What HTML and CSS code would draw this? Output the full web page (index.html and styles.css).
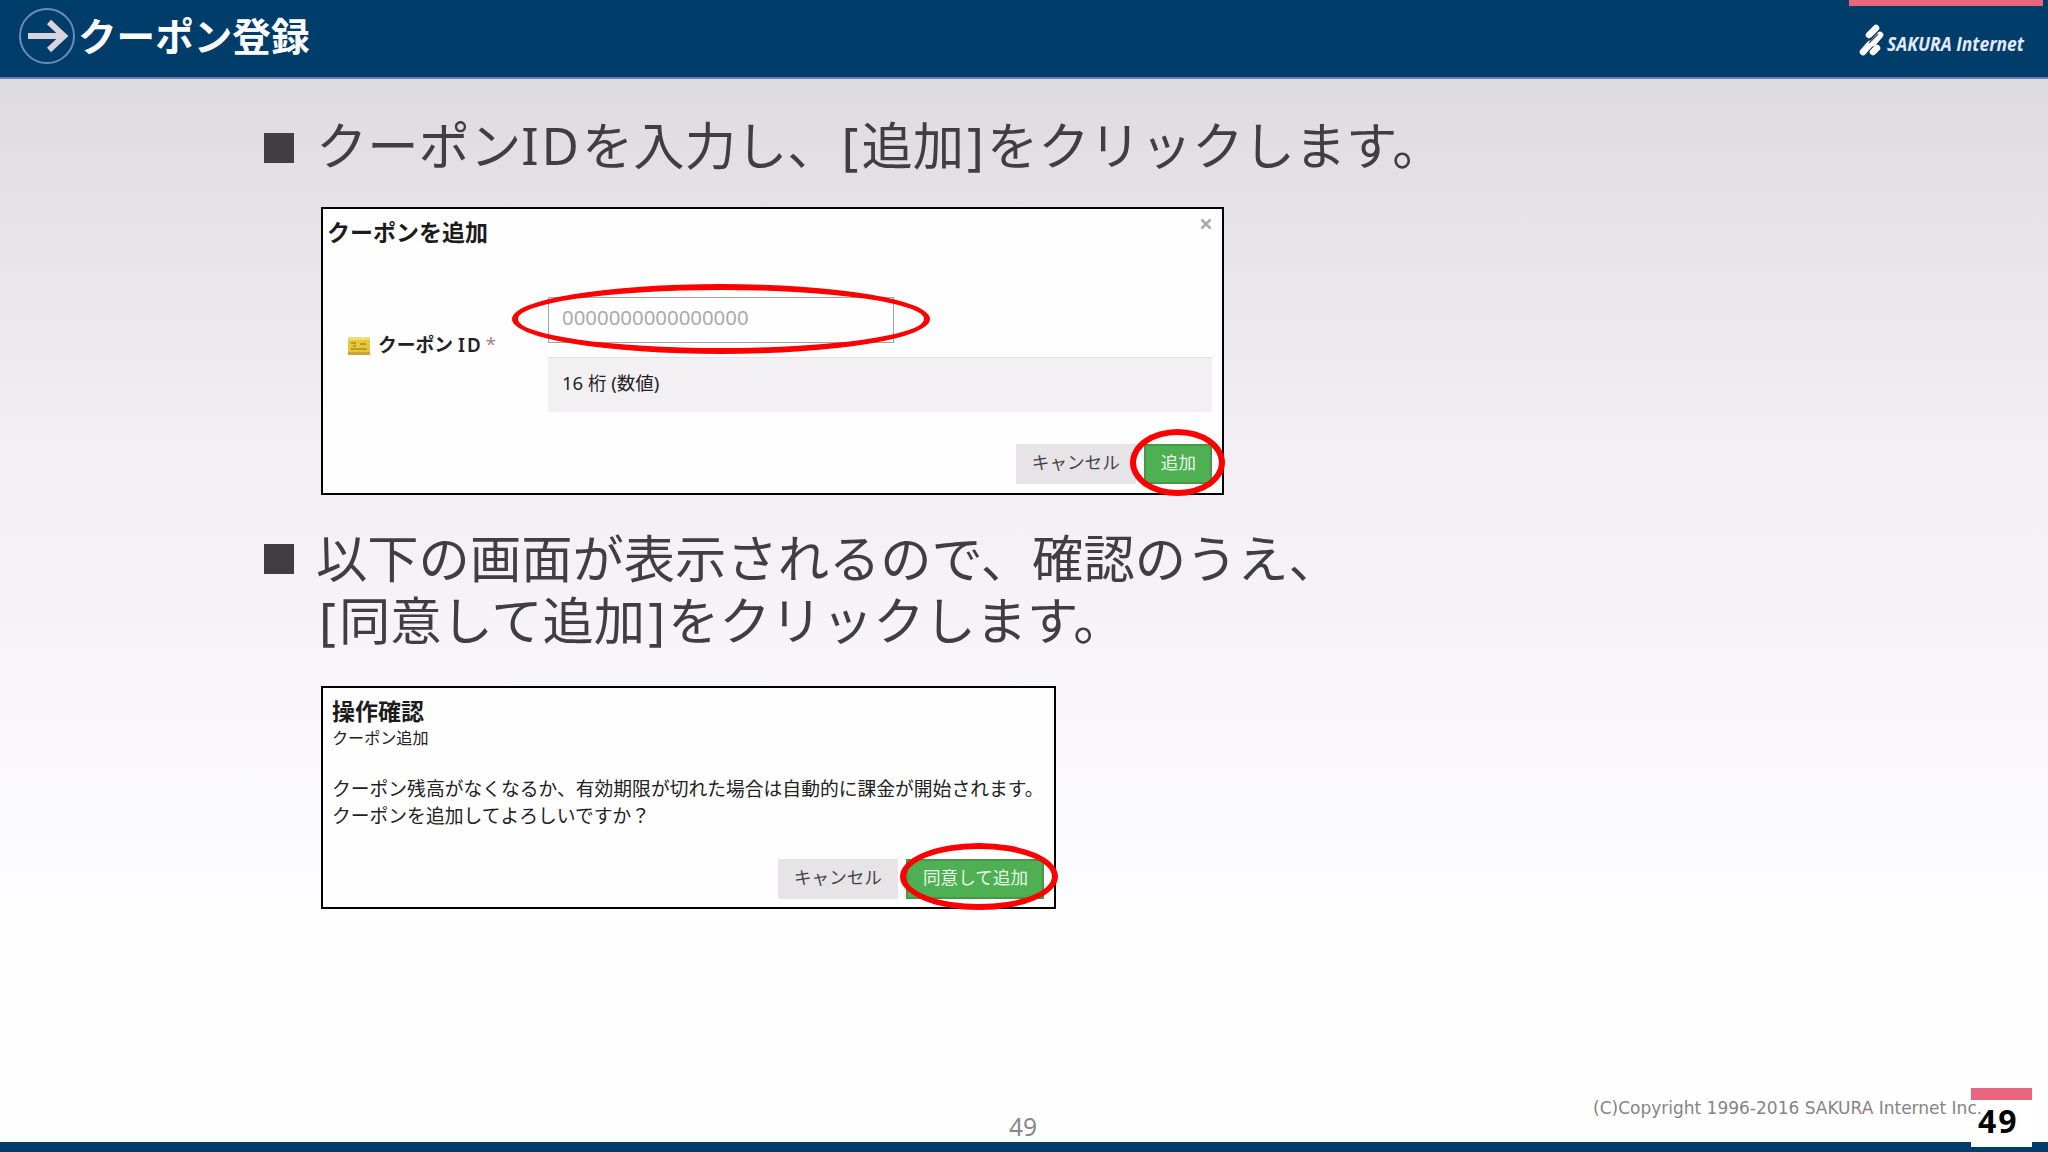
FILE: index.html
```html
<!DOCTYPE html>
<html lang="ja">
<head>
    <meta charset="UTF-8" />
    <meta name="viewport" content="width=device-width, initial-scale=1.0" />
    <title>クーポン登録</title>
    <link rel="stylesheet" href="styles.css">
</head>
<body>
    <div class="slide">
        <header class="slide-header">
            <svg class="header-icon" viewBox="0 0 58 58" aria-hidden="true">
                <circle cx="29" cy="29" r="27" fill="none" stroke="#7088bd" stroke-width="2" />
                <path d="M10 29H46M31 15L46 29L31 43" fill="none" stroke="#d9d3dc" stroke-width="6" />
            </svg>
            <h1>クーポン登録</h1>
            <div class="brand">
                <svg viewBox="0 0 176 44" role="img" aria-label="SAKURA Internet">
                    <g stroke="#fff" stroke-width="6.5" stroke-linecap="round">
                        <path d="M10 13L17 6" />
                        <path d="M14 21L21 13" />
                        <path d="M4 30L11 22" />
                        <path d="M14 30L18 26" />
                    </g>
                    <path d="M10 21L19 12" stroke="#5a5257" stroke-width="1.5" />
                    <text class="brand-text" x="28" y="29" textLength="137" lengthAdjust="spacingAndGlyphs">SAKURA Internet</text>
                </svg>
            </div>
        </header>

        <main class="content">
            <div class="step">
                <span class="bullet"></span>
                <p>クーポン<span class="latin">ID</span>を入力し、<span class="bracket">[</span>追加<span class="bracket">]</span>をクリックします。</p>
            </div>

            <section class="dialog dialog-add">
                <div class="dialog-top">
                    <h2>クーポンを追加</h2>
                    <svg class="close" viewBox="0 0 12 12" aria-hidden="true">
                        <path d="M1.5 1.5L10.5 10.5M10.5 1.5L1.5 10.5" stroke="#aaa" stroke-width="2.6" />
                    </svg>
                </div>
                <div class="form-row">
                    <div class="label">
                        <svg class="card-icon" viewBox="0 0 22 18" aria-hidden="true">
                            <rect width="22" height="18" fill="#e6c63c" />
                            <rect width="22" height="3" fill="#f0dc78" />
                            <rect y="15" width="22" height="3" fill="#c8a63a" />
                            <path d="M3 6H8M5 9H8M3 12H19M12 7H18" stroke="#b18a1c" stroke-width="1.5" />
                        </svg>
                        <span class="label-text">クーポン <span class="label-id">ID</span></span>
                        <span class="required">*</span>
                    </div>
                    <div class="field">
                        <div class="input">
                            0000000000000000
                            <span class="mark mark-input"></span>
                        </div>
                        <div class="hint">16 桁 (数値)</div>
                    </div>
                </div>
                <div class="actions">
                    <span class="btn">キャンセル</span>
                    <span class="btn btn-primary">追加<span class="mark mark-add"></span></span>
                </div>
            </section>

            <div class="step step-second">
                <span class="bullet"></span>
                <p>以下の画面が表示されるので、確認のうえ、<br><span class="bracket">[</span>同意して追加<span class="bracket">]</span>をクリックします。</p>
            </div>

            <section class="dialog dialog-confirm">
                <h2>操作確認</h2>
                <p class="subtitle">クーポン追加</p>
                <p class="message">クーポン残高がなくなるか、有効期限が切れた場合は自動的に課金が開始されます。<br>クーポンを追加してよろしいですか？</p>
                <div class="actions">
                    <span class="btn">キャンセル</span>
                    <span class="btn btn-primary">同意して追加<span class="mark mark-agree"></span></span>
                </div>
            </section>
        </main>

        <footer class="slide-footer">
            <span class="page">49</span>
            <span class="copyright">(C)Copyright 1996-2016 SAKURA Internet Inc.</span>
            <span class="page-badge">49</span>
        </footer>
    </div>
</body>
</html>
```
FILE: styles.css
```css
:root {
    --navy: #003d6b;
    --pink: #e8677f;
    --text: #403e41;
    --red: #ff0000;
    --green: #4eb052;
}

* {
    box-sizing: border-box;
}

body {
    margin: 0;
    font-family: "Noto Sans", "Noto Sans CJK JP", sans-serif;
    color: var(--text);
}

h1,
h2,
p {
    margin: 0;
}

.slide {
    width: 2048px;
    height: 1152px;
    display: flex;
    flex-direction: column;
    overflow: hidden;
    background: linear-gradient(#dddbdf 78px, #e4e2e6 200px, #f1eff2 440px, #f6f4f8 640px, #fcfbfd 860px, #fefefe 1000px);
}

/* header */

.slide-header {
    height: 79px;
    flex: none;
    display: flex;
    align-items: flex-start;
    padding-left: 18px;
    background-color: var(--navy);
    border-bottom: 2px solid #6482ac;
}

.header-icon {
    width: 58px;
    height: 58px;
    margin-top: 7px;
}

.slide-header h1 {
    margin-left: 2px;
    color: white;
    font-family: "Noto Sans CJK JP", sans-serif;
    font-size: 38.6px;
    font-weight: 700;
    line-height: 68px;
}

.brand {
    width: 194px;
    margin-left: auto;
    margin-right: 5px;
    padding: 16px 0 0 10px;
    border-top: 6px solid var(--pink);
}

.brand svg {
    display: block;
    width: 176px;
    height: 44px;
}

.brand-text {
    fill: #e4e9f8;
    font-family: "Open Sans", sans-serif;
    font-size: 19.5px;
    font-style: italic;
    font-weight: 700;
}

/* body */

.content {
    flex: 1;
    padding: 33px 0 0 264px;
}

.step {
    display: flex;
    gap: 22px;
    font-family: "Noto Sans CJK JP", sans-serif;
    font-size: 51.3px;
    font-weight: 400;
    line-height: 62px;
    white-space: nowrap;
}

.step-second {
    margin-top: 30px;
}

.bullet {
    width: 30px;
    height: 30px;
    margin-top: 21px;
    background-color: var(--text);
}

.step-second .bullet {
    margin-top: 19px;
}

.latin {
    font-family: "Noto Sans", sans-serif;
    letter-spacing: 3px;
}

.bracket {
    font-family: "Noto Sans", sans-serif;
    padding: 0 3px;
}

.dialog {
    margin-left: 57px;
    background-color: #fefefe;
    border: 2px solid #000;
    color: #222;
    font-size: 18.8px;
    display: flex;
    flex-direction: column;
}

.dialog h2 {
    color: #1c1c1c;
    font-size: 23px;
    line-height: 30px;
}

.dialog-add {
    width: 903px;
    height: 288px;
    margin-top: 31px;
    padding: 8px 10px 9px 4px;
}

.dialog-top {
    display: flex;
    justify-content: space-between;
}

.close {
    width: 12px;
    height: 12px;
    margin-top: 1px;
}

.form-row {
    display: flex;
    margin-top: 50px;
}

.label {
    width: 221px;
    display: flex;
    align-items: center;
    padding-left: 21px;
    height: 94px;
}

.card-icon {
    width: 22px;
    height: 18px;
    margin-top: 3px;
}

.label-text {
    margin-left: 8px;
    font-weight: 600;
}

.label-id {
    letter-spacing: 2px;
}

.required {
    margin-left: 3px;
    color: #a8808c;
}

.field {
    flex: 1;
}

.input {
    position: relative;
    width: 346px;
    height: 46px;
    padding-left: 13px;
    border: 1px solid #a5a5a5;
    color: #aaa;
    font-size: 20.4px;
    line-height: 39px;
}

.hint {
    height: 55px;
    margin-top: 14px;
    padding-left: 14px;
    background-color: #f2f0f2;
    border-top: 1px solid #e2e0e2;
    font-size: 18.5px;
    line-height: 50px;
}

.actions {
    display: flex;
    justify-content: flex-end;
    gap: 8px;
    margin-top: auto;
}

.btn {
    position: relative;
    height: 40px;
    padding: 0 16px;
    background-color: #e6e4e6;
    color: #444;
    font-size: 17.6px;
    line-height: 37px;
}

.btn-primary {
    padding: 0 14px 0 15px;
    background-color: var(--green);
    border: 2px solid #45984a;
    color: #e6f8e6;
    line-height: 33px;
}

.dialog-confirm {
    width: 735px;
    height: 223px;
    margin-top: 35px;
    padding: 8px 10px 8px 9px;
}

.dialog-confirm .subtitle {
    font-size: 16.1px;
    line-height: 24px;
}

.dialog-confirm .message {
    margin-top: 26px;
    line-height: 27px;
    white-space: nowrap;
}

/* red ellipses drawn over the dialogs */

.mark {
    position: absolute;
    border: 6px solid var(--red);
    border-radius: 50%;
}

.mark-input {
    left: -37px;
    top: -14px;
    width: 418px;
    height: 70px;
}

.mark-add {
    left: -16px;
    top: -17px;
    width: 95px;
    height: 67px;
}

.mark-agree {
    left: -8px;
    top: -18px;
    width: 158px;
    height: 67px;
}

/* footer */

.slide-footer {
    height: 64px;
    display: grid;
    grid-template-columns: 1009px 584px 378px 61px;
    border-bottom: 10px solid var(--navy);
}

.page {
    grid-column: 2;
    padding-top: 22px;
    color: #8a888b;
    font-size: 24.5px;
    line-height: 34px;
}

/* the last letters run over the page badge */
.copyright {
    position: relative;
    z-index: 1;
    grid-column: 3;
    padding-top: 8px;
    color: #858386;
    font-family: "DejaVu Sans", sans-serif;
    font-size: 17px;
    line-height: 24px;
    white-space: nowrap;
}

.page-badge {
    grid-column: 4;
    height: 59px;
    padding-left: 7px;
    background-color: white;
    border-top: 12px solid var(--pink);
    color: #000;
    font-size: 32px;
    font-weight: 700;
    line-height: 42px;
    letter-spacing: 2px;
}
```
